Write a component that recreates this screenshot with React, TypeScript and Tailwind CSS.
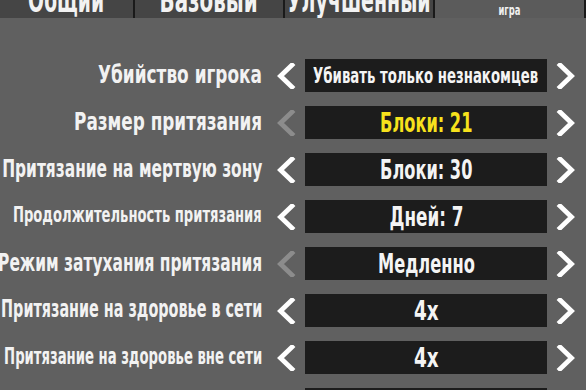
import React, { useLayoutEffect, useRef, useState } from "react";

const FONT = { fontFamily: '"DejaVu Sans Condensed", "DejaVu Sans", "Roboto", sans-serif' };

function Fit({
  children,
  width,
  origin,
  className,
}: {
  children: React.ReactNode;
  width: number;
  origin: string;
  className: string;
}) {
  const ref = useRef<HTMLSpanElement>(null);
  const [s, setS] = useState(1);
  useLayoutEffect(() => {
    if (ref.current) {
      const w = ref.current.offsetWidth;
      if (w > 0) setS(width / w);
    }
  }, [width]);
  return (
    <span
      ref={ref}
      className={`inline-block whitespace-nowrap shrink-0 ${className}`}
      style={{ transform: `scaleX(${s})`, transformOrigin: origin }}
    >
      {children}
    </span>
  );
}

type Row = {
  label: string;
  labelSize: string;
  labelW: number;
  value: string;
  valueSize: string;
  valueW: number;
  yellow?: boolean;
  leftDisabled?: boolean;
};

const rows: Row[] = [
  { label: "Убийство игрока", labelSize: "text-[25px]", labelW: 164, value: "Убивать только незнакомцев", valueSize: "text-[22px]", valueW: 225 },
  { label: "Размер притязания", labelSize: "text-[25px]", labelW: 188, value: "Блоки: 21", valueSize: "text-[27px]", valueW: 92, yellow: true, leftDisabled: true },
  { label: "Притязание на мертвую зону", labelSize: "text-[25px]", labelW: 260, value: "Блоки: 30", valueSize: "text-[27px]", valueW: 92 },
  { label: "Продолжительность притязания", labelSize: "text-[21px]", labelW: 249, value: "Дней: 7", valueSize: "text-[27px]", valueW: 74 },
  { label: "Режим затухания притязания", labelSize: "text-[25px]", labelW: 264, value: "Медленно", valueSize: "text-[27px]", valueW: 97, leftDisabled: true },
  { label: "Притязание на здоровье в сети", labelSize: "text-[24px]", labelW: 261, value: "4x", valueSize: "text-[27px]", valueW: 25 },
  { label: "Притязание на здоровье вне сети", labelSize: "text-[23px]", labelW: 258, value: "4x", valueSize: "text-[27px]", valueW: 25 },
  { label: "Строительство в чужих притязаниях", labelSize: "text-[22px]", labelW: 247, value: "Выкл.", valueSize: "text-[27px]", valueW: 60 },
];

function Chevron({ dir, color }: { dir: "left" | "right"; color: string }) {
  const d = dir === "left" ? "M16 2 L4.5 13 L16 24" : "M4 2 L15.5 13 L4 24";
  return (
    <svg width="20" height="26" viewBox="0 0 20 26" className="shrink-0 block">
      <path d={d} fill="none" stroke={color} strokeWidth="4.8" strokeLinecap="square" strokeLinejoin="miter" />
    </svg>
  );
}

function Tab({ w, label, textW, active, small }: { w: string; label: string; textW: number; active?: boolean; small?: boolean }) {
  return (
    <div
      className={`${w} h-[18px] shrink-0 overflow-hidden flex justify-center ${small ? "items-start" : "items-end pb-[1px]"} ${active ? "bg-[#5b5b5b]" : "bg-[#454545]"}`}
    >
      {small ? (
        <Fit width={textW} origin="center" className="text-[14px] leading-none font-bold text-[#f0f0f0] mt-[3px]">
          {label}
        </Fit>
      ) : (
        <Fit width={textW} origin="center" className="text-[34px] leading-none font-bold text-[#f2f2f2]">
          {label}
        </Fit>
      )}
    </div>
  );
}

export default function App() {
  return (
    <div className="w-[586px] h-[390px] overflow-hidden bg-[#606060] flex flex-col select-none" style={FONT}>
      <div className="flex h-[18px] shrink-0 bg-[#1c1c1c]">
        <Tab w="w-[133px]" label="Общий" textW={76} />
        <div className="w-[2px] shrink-0 bg-[#1a1a1a]" />
        <Tab w="w-[148px]" label="Базовый" textW={98} />
        <div className="w-[2px] shrink-0 bg-[#1a1a1a]" />
        <Tab w="w-[148px]" label="Улучшенный" textW={144} />
        <div className="w-[2px] shrink-0 bg-[#1a1a1a]" />
        <Tab w="w-[149px]" label="игра" textW={22} active small />
        <div className="w-[2px] shrink-0 bg-[#1a1a1a]" />
      </div>
      <div className="flex flex-col gap-[14px] pt-[41px]">
        {rows.map((r, i) => (
          <div key={i} className="flex items-center h-[33px] shrink-0">
            <div className="w-[262px] shrink-0 flex justify-end mb-[3px]">
              <Fit width={r.labelW} origin="right" className={`${r.labelSize} font-bold text-[#f2f2f2] leading-none`}>
                {r.label}
              </Fit>
            </div>
            <div className="ml-[14px]">
              <Chevron dir="left" color={r.leftDisabled ? "#8c8c8c" : "#ffffff"} />
            </div>
            <div className="ml-[9px] w-[242px] h-[33px] shrink-0 bg-[#1c1c1c] flex items-center justify-center overflow-hidden">
              <Fit
                width={r.valueW}
                origin="center"
                className={`${r.valueSize} font-bold leading-none ${r.yellow ? "text-[#f7e21c]" : "text-[#f4f4f4]"}`}
              >
                {r.value}
              </Fit>
            </div>
            <div className="ml-[9px]">
              <Chevron dir="right" color="#ffffff" />
            </div>
          </div>
        ))}
      </div>
    </div>
  );
}
